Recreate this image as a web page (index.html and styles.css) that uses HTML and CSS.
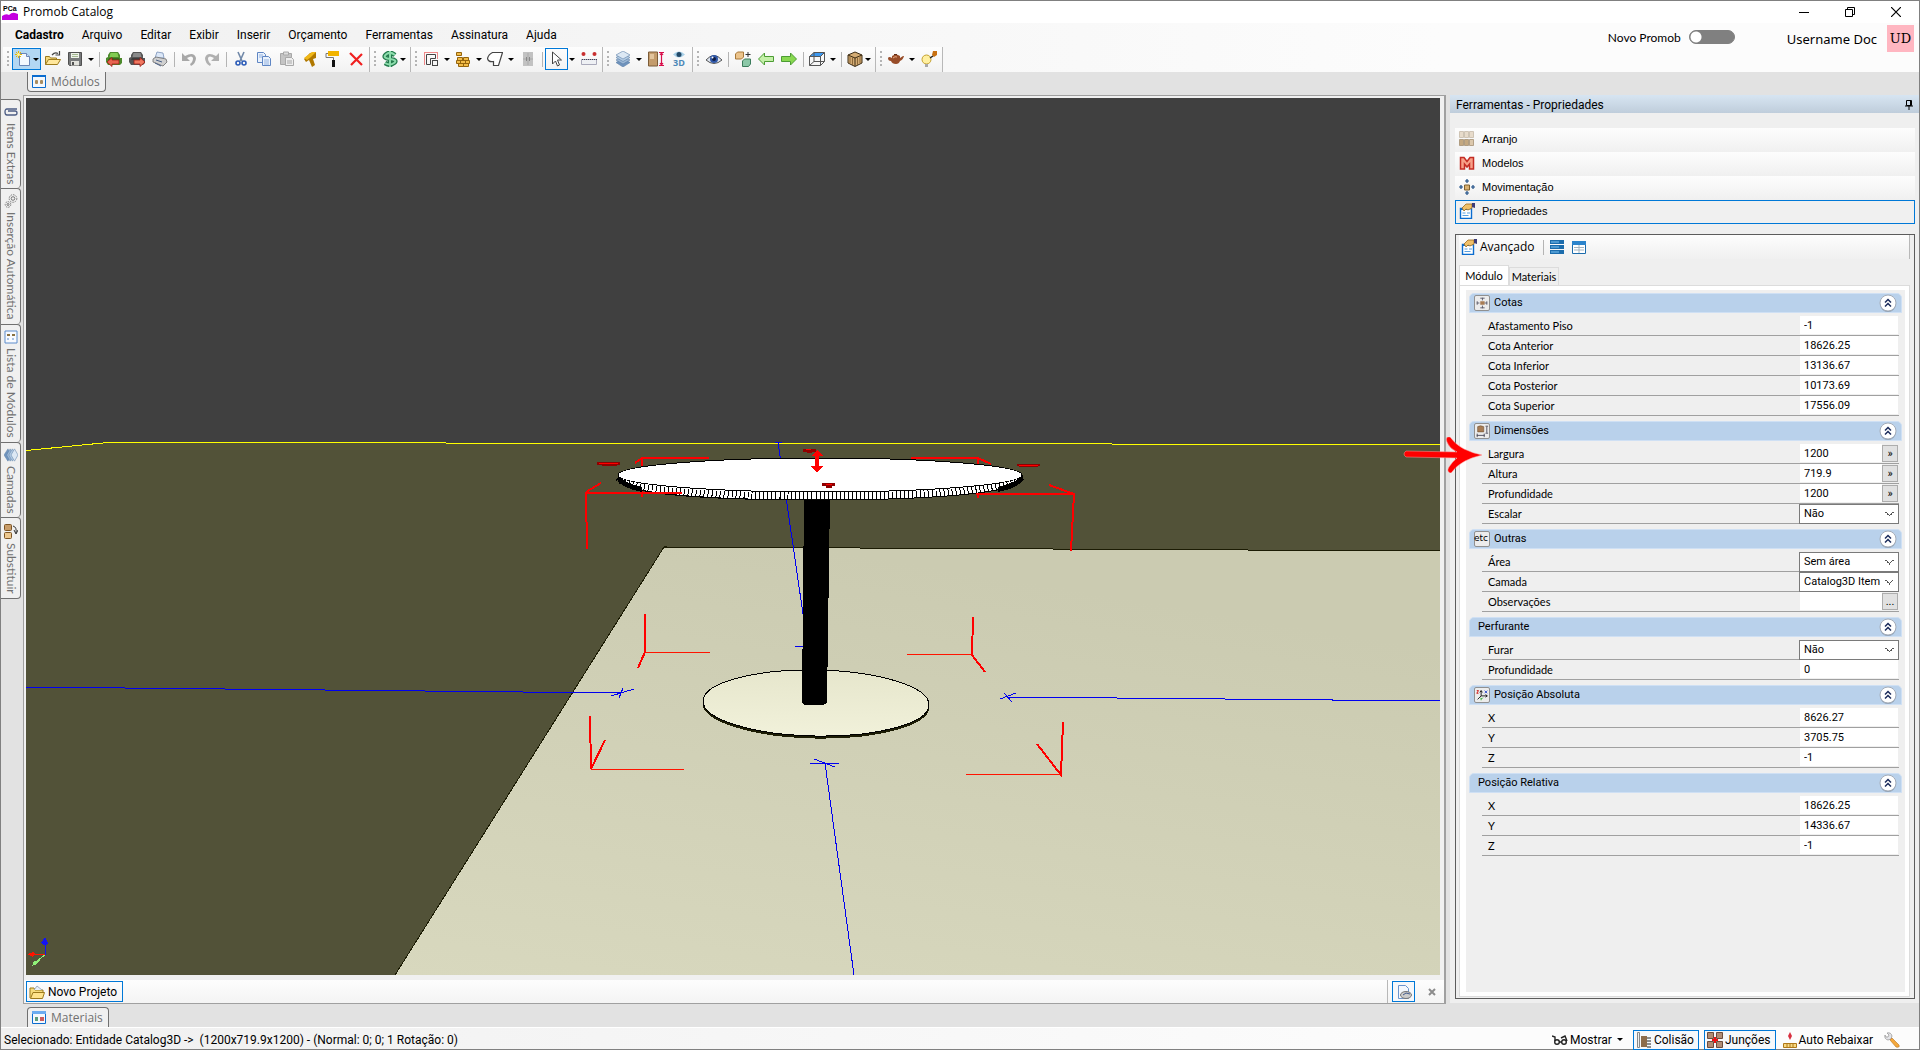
FILE: index.html
```
<!DOCTYPE html>
<html lang="pt-BR">
<head>
    <meta charset="UTF-8">
    <title>Promob Catalog</title>
    <link rel="stylesheet" href="styles.css">
</head>
<body>
    <!-- shared symbols -->
    <svg class="defs" width="0" height="0">
        <symbol id="chevrons" viewBox="0 0 18 18">
            <circle cx="9" cy="10" r="8" fill="#8ea0b4"/>
            <circle cx="9" cy="9" r="8" fill="#fff" stroke="#a4acb8"/>
            <path d="M6 8.500l3-3 3 3M6 12.500l3-3 3 3" fill="none" stroke="#1c2c5c" stroke-width="1.500"/>
        </symbol>
        <symbol id="layers" viewBox="0 0 16 16">
            <g stroke="#5c80a8" stroke-width=".6">
                <path d="M1 11.500l7-4 7 4-7 4.500z" fill="#6f93bd"/>
                <path d="M1 9l7-4 7 4-7 4z" fill="#9cb8d6"/>
                <path d="M1 6.500l7-4 7 4-7 4z" fill="#b4cce4"/>
                <path d="M1 4l7-4 7 4-7 4z" fill="#dce8f4"/>
            </g>
        </symbol>
        <symbol id="hand-form" viewBox="0 0 16 16">
            <path d="M1.500 5.500h11v10h-11z" fill="#fff" stroke="#0a6ccf" stroke-width="1.400"/>
            <path d="M1 5h9v2H1z" fill="#0a6ccf"/>
            <path d="M3 5l4-4 6 0 0 4-4 2-2-1-2 2z" fill="#f0c069" stroke="#9a6a1e" stroke-width=".8"/>
            <path d="M13 0h3v5l-3-1z" fill="#3c3c78"/>
            <path d="M3.500 10h3M3.500 12.500h6M8 10h3" stroke="#5aa0e0" stroke-width="1.200"/>
        </symbol>
        <symbol id="folder" viewBox="0 0 16 16">
            <path d="M1 14V4h4l1 2h8v3" fill="#f6dc7c" stroke="#9c7a1c"/>
            <path d="M5 6l3-4 5 4" fill="#e8f0fa" stroke="#8c9cb4" stroke-width=".8"/>
            <path d="M1.500 14.500L4 8.500h11.500l-2 6z" fill="#ffe48c" stroke="#9c7a1c"/>
        </symbol>
    </svg>

    <div class="window">
        <header class="titlebar">
            <svg class="logo" width="16" height="16" viewBox="0 0 16 16"><path d="M0 12q4-3 7-1 3-3 6-2l3 1v6H0z" fill="#c400e0"/><text x="1" y="7" class="logo-text">PCa</text></svg>
            <h1>Promob Catalog</h1>
            <div class="window-buttons">
                <button type="button" aria-label="Minimizar"><svg width="10" height="10" viewBox="0 0 10 10"><path d="M0 5.500h10" stroke="#000"/></svg></button>
                <button type="button" aria-label="Restaurar"><svg width="10" height="10" viewBox="0 0 10 10" fill="none" stroke="#000"><path d="M.5 2.500h7v7h-7zM2.500 2.500v-2h7v7h-2"/></svg></button>
                <button type="button" aria-label="Fechar"><svg width="10" height="10" viewBox="0 0 10 10"><path d="M0 0l10 10M10 0L0 10" stroke="#000" stroke-width="1.200"/></svg></button>
            </div>
        </header>

        <div class="topbar">
            <div class="topbar-left">
                <nav class="menu">
                    <a href="#" class="current">Cadastro</a>
                    <a href="#">Arquivo</a>
                    <a href="#">Editar</a>
                    <a href="#">Exibir</a>
                    <a href="#">Inserir</a>
                    <a href="#">Orçamento</a>
                    <a href="#">Ferramentas</a>
                    <a href="#">Assinatura</a>
                    <a href="#">Ajuda</a>
                </nav>
                <div class="toolbar">
                    <div class="strip">
                        <button type="button" class="drop active" aria-label="Novo"><svg width="16" height="16" viewBox="0 0 16 16"><path d="M4.500 2.500h7l3 3v9h-10z" fill="#f4f8fe" stroke="#6b87b8"/><path d="M11.500 2.500v3h3" fill="#cfdff5" stroke="#6b87b8"/><path d="M3.500 0v7M0 3.500h7M1 1l5 5M6 1L1 6" stroke="#e8b800"/><circle cx="3.500" cy="3.500" r="1.500" fill="#fff6a0"/></svg></button>
                        <button type="button" aria-label="Abrir"><svg width="16" height="16" viewBox="0 0 16 16"><path d="M.5 13.500v-8h4l1 1.500h6v3" fill="#f3d87c" stroke="#9c7a1c"/><path d="M.5 13.500l3-5h12l-3 5z" fill="#ffe79c" stroke="#9c7a1c"/><path d="M7 4q3-3.500 6-1.500M14.500 0v4h-4" fill="none" stroke="#444" stroke-width="1.200"/></svg></button>
                        <button type="button" class="split" aria-label="Salvar"><svg width="16" height="16" viewBox="0 0 16 16"><path d="M1.500 1.500h13v13h-12l-1-1z" fill="#77797a" stroke="#505050"/><path d="M4 2h8v5H4z" fill="#eef2ea"/><path d="M4 10h8v4.500H4z" fill="#e2e2dc"/><path d="M5 11h2v3H5z" fill="#505050"/><path d="M5 3.500h6M5 5.500h6" stroke="#a4b890"/></svg></button>
                        <i class="sep"></i>
                        <button type="button" aria-label="Importar"><svg width="16" height="16" viewBox="0 0 16 16"><path d="M4 1h8l2 3v3h2v5l-2 2H2l-2-3V7l2-1V4z" fill="#4d8a2c"/><path d="M4.500 2h7l1 4h-9z" fill="#82cc52"/><path d="M3 7h10l1 2H2z" fill="#356c1c"/><path d="M1 11l5-4.500V9h7v4H6v2.500z" fill="#e86450" stroke="#9c1c14" stroke-width=".8"/></svg></button>
                        <button type="button" aria-label="Exportar"><svg width="16" height="16" viewBox="0 0 16 16"><path d="M4 1h8l2 3v3h2v5l-2 2H2l-2-3V7l2-1V4z" fill="#555"/><path d="M4.500 2h7l1 4h-9z" fill="#8a8a8a"/><path d="M3 7h10l1 2H2z" fill="#3c3c3c"/><path d="M16 11l-5-4.500V9H5v4h6v2.500z" fill="#f07860" stroke="#9c1c14" stroke-width=".8"/></svg></button>
                        <button type="button" aria-label="Imprimir"><svg width="16" height="16" viewBox="0 0 16 16"><path d="M3 7L5 1l6 1 1 5z" fill="#dce8f8" stroke="#7890b8" stroke-width=".8"/><path d="M1 8l3-2 10 2 1 3-4 4-10-4z" fill="#d0d0d0" stroke="#6c6c6c" stroke-width=".8"/><path d="M4 9l6 2M3 12l6 3" stroke="#4a6088"/></svg></button>
                        <i class="sep"></i>
                        <button type="button" aria-label="Desfazer"><svg width="16" height="16" viewBox="0 0 16 16"><path d="M1 2v8h8L6 7q5-3 6 0 0 4-3 6l1 2q5-3 5-8Q13 0 4 5z" fill="#a8a8a8"/></svg></button>
                        <button type="button" aria-label="Refazer"><svg width="16" height="16" viewBox="0 0 16 16"><path d="M15 2v8H7l3-3Q5 4 4 7q0 4 3 6l-1 2Q1 12 1 7 3 0 12 5z" fill="#b0b0b0"/></svg></button>
                        <i class="sep"></i>
                        <button type="button" aria-label="Recortar"><svg width="16" height="16" viewBox="0 0 16 16" fill="none"><path d="M5 1l4 9M11 1L7 10" stroke="#7088a8" stroke-width="1.600"/><circle cx="5" cy="12" r="2" stroke="#2c5cb8" stroke-width="1.600"/><circle cx="11" cy="12" r="2" stroke="#2c5cb8" stroke-width="1.600"/></svg></button>
                        <button type="button" aria-label="Copiar"><svg width="16" height="16" viewBox="0 0 16 16" fill="#eaf2fc" stroke="#5f86c4"><path d="M1.500 1.500h6l2 2v8h-8z"/><path d="M6.500 5.500h6l2 2v7h-8z"/><path d="M8 9h5M8 11h5M8 13h5M3 4h4M3 6h3" stroke="#94b2e0"/></svg></button>
                        <button type="button" aria-label="Colar"><svg width="16" height="16" viewBox="0 0 16 16" stroke="#a8a8a8"><path d="M1.500 2.500h11v11h-11z" fill="#c4c4c4"/><path d="M4.500 1h5v3h-5z" fill="#ddd"/><path d="M6.500 6.500h6l2 2v6h-8z" fill="#eee"/><path d="M8 10h5M8 12h5"/></svg></button>
                        <button type="button" aria-label="Martelo"><svg width="16" height="16" viewBox="0 0 16 16"><path d="M2 8l6-6 6-1 0 6-3 1 2 6-3 2-3-7-3 2z" fill="#b07800"/><path d="M2 7l8-6 4 0-5 5-4 3z" fill="#f0b818"/></svg></button>
                        <button type="button" aria-label="Pintar"><svg width="16" height="16" viewBox="0 0 16 16"><path d="M3 0h11v5H3z" fill="#f2b400"/><path d="M3 2.500H1v4h7.500V10" fill="none" stroke="#777"/><path d="M7 9h3v7H7z" fill="#111"/></svg></button>
                        <button type="button" aria-label="Excluir"><svg width="16" height="16" viewBox="0 0 16 16"><path d="M2 2l12 12M14 3L3 14" stroke="#f02020" stroke-width="2.200"/></svg></button>
                    </div>
                    <div class="strip">
                        <button type="button" class="drop" aria-label="Orçamento"><svg width="16" height="16" viewBox="0 0 16 16"><path d="M8 0v16M13 4Q8 0 4 3.500T8 8t4 4-9 0" fill="none" stroke="#237a4c" stroke-width="4.500"/><path d="M8 0v16M13 4Q8 0 4 3.500T8 8t4 4-9 0" fill="none" stroke="#8cdcac" stroke-width="2"/></svg></button>
                    </div>
                    <div class="strip">
                        <button type="button" class="split" aria-label="Planta"><svg width="16" height="16" viewBox="0 0 16 16" fill="none" stroke="#444"><path d="M1 1.500h14M1.500 1v13M14.500 1v7" stroke="#e88"/><path d="M3.500 3.500h9v4h-5v6h-4z"/><rect x="9.500" y="9.500" width="5" height="5"/></svg></button>
                        <button type="button" class="split" aria-label="Paredes"><svg width="16" height="16" viewBox="0 0 16 16" fill="#f2bc48" stroke="#94640c"><path d="M1.500 1.500h5v3h-5zM2.500 6.500h5v3h-5zM8.500 6.500h5v3h-5zM1.500 9.500h4v3h-4zM5.500 9.500h5v3h-5zM10.500 9.500h4v3h-4zM3.500 12.500h5v3h-5zM8.500 12.500h5v3h-5z"/></svg></button>
                        <button type="button" class="split" aria-label="Forma"><svg width="16" height="16" viewBox="0 0 16 16"><path d="M5.500 1.500h10l-4 13h-5v-4q-5 1-6-3 1-4 5-6z" fill="#fff" stroke="#444" stroke-width="1.200"/></svg></button>
                        <button type="button" aria-label="Porta"><svg width="16" height="16" viewBox="0 0 16 16"><path d="M3 1h10v14H3z" fill="#c2c2c2"/><path d="M8 2v12M3 8h10" stroke="#aaa"/><path d="M6 6h1v4H6zM9 6h1v4H9z" fill="#888"/></svg></button>
                        <i class="sep"></i>
                        <button type="button" class="split active-outline" aria-label="Selecionar"><svg width="16" height="16" viewBox="0 0 16 16"><path d="M4.500 1v12l3-3 2 5 2-1-2-5h4z" fill="#fff" stroke="#444"/></svg></button>
                        <button type="button" aria-label="Medir"><svg width="16" height="16" viewBox="0 0 16 16"><circle cx="2.500" cy="3" r="2" fill="#c83030"/><circle cx="13.500" cy="3" r="2" fill="#c83030"/><path d="M.5 8.500h15v5H.500z" fill="#eef0f4" stroke="#aab"/><path d="M1 8.500h15" stroke="#445" stroke-dasharray="1 1"/></svg></button>
                    </div>
                    <div class="strip">
                        <button type="button" class="split" aria-label="Camadas"><svg width="16" height="16"><use href="#layers"/></svg></button>
                        <button type="button" aria-label="Cotas"><svg width="16" height="16" viewBox="0 0 16 16"><path d="M.5 1h9v14h-9z" fill="#c49c6c" stroke="#7c5c38"/><path d="M2 3h4v5H2z" fill="#e2c49c"/><path d="M11 1.500h5M11 14.500h5M13.500 2v12M12 4l1.500-2L15 4M12 12l1.500 2 1.500-2" stroke="#d8104c" fill="none" stroke-width="1.200"/></svg></button>
                        <button type="button" aria-label="Visualizar 3D"><svg width="16" height="16" viewBox="0 0 16 16"><path d="M2 3.500q6-6 12 0-6 6-12 0z" fill="#a8d0e8"/><circle cx="8" cy="3.500" r="2.500" fill="#244a68"/><text x="2" y="15" class="icon-3d">3D</text></svg></button>
                    </div>
                    <div class="strip">
                        <button type="button" aria-label="Exibir"><svg width="16" height="16" viewBox="0 0 16 16"><path d="M0 9Q8 0 16 9 8 16 0 9z" fill="#dce4f0" stroke="#555"/><circle cx="8" cy="8" r="4" fill="#3058a8"/><circle cx="8" cy="8" r="2" fill="#101c44"/><circle cx="6.500" cy="6.500" r="1" fill="#fff"/></svg></button>
                        <i class="sep"></i>
                        <button type="button" aria-label="Substituir"><svg width="16" height="16" viewBox="0 0 16 16"><path d="M.5 3l2-2h6v5l-2 2h-6z" fill="#ecc48c" stroke="#a87838"/><path d="M7.500 10l2-2h6v5l-2 2.500h-6z" fill="#8cc8a8" stroke="#3c7c5c"/><path d="M13 1v5M10.500 3.500h5" stroke="#333"/></svg></button>
                        <button type="button" aria-label="Anterior"><svg width="16" height="16" viewBox="0 0 16 16"><path d="M.5 8l6-6v3.500h9v5h-9V14z" fill="#c4f0a8" stroke="#4c9c34"/></svg></button>
                        <button type="button" aria-label="Próximo"><svg width="16" height="16" viewBox="0 0 16 16"><path d="M15.500 8l-6-6v3.500h-9v5h9V14z" fill="#88d850" stroke="#4c9c34"/></svg></button>
                        <i class="sep"></i>
                        <button type="button" class="split" aria-label="Vista"><svg width="16" height="16" viewBox="0 0 16 16" fill="none" stroke="#555"><path d="M5 1.500h10.500l-4 4H.500z" fill="#3c98f0"/><path d="M.5 5.500h11v9H.500zM15.500 1.500v9l-4 4M5 1.500v9h10.500M5 10.500l-4.500 4"/></svg></button>
                        <i class="sep"></i>
                        <button type="button" class="drop" aria-label="Material"><svg width="16" height="16" viewBox="0 0 16 16"><path d="M1 4l7-3 7 3v8l-7 3.500L1 12z" fill="#d4ac74" stroke="#3c2c14"/><path d="M1 4l7 3 7-3M8 7v8" fill="none" stroke="#3c2c14"/><path d="M3 5v7M5.500 6v8M10.500 6v8M13 5v7" fill="none" stroke="#8c6838"/></svg></button>
                    </div>
                    <div class="strip">
                        <button type="button" class="split" aria-label="Renderizar"><svg width="16" height="16" viewBox="0 0 16 16"><path d="M4 5q4-3 8 0v2l3-2h1q-1 4-4 5-1 3-4 3-4 0-5-3-3 0-3-3 1-2 4 0z" fill="#984c28"/><path d="M6 3h3v1H6z" fill="#602c14"/><path d="M5 7q2-2 4-1" stroke="#e8a880" fill="none"/></svg></button>
                        <button type="button" aria-label="Iluminação"><svg width="16" height="16" viewBox="0 0 16 16"><circle cx="5.500" cy="8.500" r="4.500" fill="#fff0a0" stroke="#c4a030"/><path d="M4 13h3v3H4z" fill="#a8a8a8"/><path d="M12 0h4v4l-3 2-2-2z" fill="#c87010"/><path d="M9 7l3-2" stroke="#222" stroke-width="1.500"/></svg></button>
                    </div>
                </div>
            </div>
            <div class="account">
                <label class="switch-label" for="novo-promob">Novo Promob</label>
                <input type="checkbox" id="novo-promob" class="switch">
                <span class="user-name">Username Doc</span>
                <span class="avatar">UD</span>
            </div>
        </div>

        <div class="workspace">
            <div class="main">
                <div class="dock-top">
                    <button type="button" class="dock-tab"><svg width="14" height="13" viewBox="0 0 14 13"><path d="M.5.5h13v12H.500z" fill="#f4f8fc" stroke="#0a6ccf"/><path d="M0 0h14v2H0z" fill="#0a6ccf"/><rect x="3" y="5" width="3" height="4" rx="1" fill="#a88c60"/><rect x="8" y="5" width="3" height="4" rx="1" fill="#a88c60"/></svg>Módulos</button>
                </div>
                <div class="center">
                    <div class="dock-side">
                        <button type="button"><svg width="14" height="14" viewBox="0 0 14 14"><path d="M13 4H3q-2 0-2 3t2 3h8q2 0 2-2t-2-2H4" fill="none" stroke="#4c5c84" stroke-width="1.300"/></svg>Itens Extras</button>
                        <button type="button"><svg width="14" height="14" viewBox="0 0 14 14" fill="none" stroke="#777"><circle cx="9" cy="4.500" r="3.800" stroke-dasharray="1.500 1"/><circle cx="9" cy="4.500" r="1.800"/><circle cx="4" cy="10.500" r="2.800" stroke-dasharray="1.500 1"/><circle cx="4" cy="10.500" r="1"/></svg>Inserção Automática</button>
                        <button type="button"><svg width="14" height="14" viewBox="0 0 14 14"><path d="M1 1h12v12H1z" fill="#f8fafe" stroke="#5c8ccc"/><path d="M3 4h3v2H3zM8 4h3v2H8z" fill="#887040"/><path d="M3 9h2M8 9h2" stroke="#5c8ccc"/></svg>Lista de Módulos</button>
                        <button type="button"><svg class="turned" width="14" height="14"><use href="#layers"/></svg>Camadas</button>
                        <button type="button"><svg width="14" height="16" viewBox="0 0 14 16"><rect x=".5" y="1.500" width="7" height="6" rx="1" fill="#c89c68" stroke="#7c5424"/><rect x=".5" y="9.500" width="7" height="6" rx="1" fill="#ecc890" stroke="#7c5424"/><path d="M9 3q4 1 3 7M10 7l2 4 2-4" fill="none" stroke="#333"/></svg>Substituir</button>
                    </div>
                    <main class="frame">
                        <svg class="viewport" viewBox="26 98 1414 877" preserveAspectRatio="none" shape-rendering="crispEdges">
                            <defs>
                                <linearGradient id="floor" x1="0" y1="1" x2=".4" y2="0">
                                    <stop offset="0" stop-color="#d8d8be"/>
                                    <stop offset="1" stop-color="#cbcbb1"/>
                                </linearGradient>
                                <linearGradient id="base" x1="0" y1="0" x2="0" y2="1">
                                    <stop offset="0" stop-color="#e6e6cc"/>
                                    <stop offset="1" stop-color="#f1f1da"/>
                                </linearGradient>
                            </defs>
                            <rect x="26" y="98" width="1414" height="877" fill="#404040"/>
                            <path d="M26 450L108 443 1440 444V975H26z" fill="#525238"/>
                            <path d="M26 450.500L108 442.500 1440 444.500" fill="none" stroke="#ff0"/>
                            <path d="M664 547L1440 551V975H395z" fill="url(#floor)"/>
                            <path d="M395 975L664 547 1440 551" fill="none" stroke="#1c1c04"/>
                            <!-- dimension lines -->
                            <g fill="none" stroke="#0000f0">
                                <path d="M26 687L622 693M611 696l23-7M623 688l-4 10"/>
                                <path d="M1440 701L1008 697M1000 699l16-6M1004 693l8 9"/>
                                <path d="M775 442h7M778 442L803 614M795 646h8"/>
                                <path d="M854 975L825 763M810 763h29M814 759l21 8"/>
                            </g>
                            <!-- back corners -->
                            <g fill="none" stroke="red" stroke-width="2">
                                <path d="M709 458h-67v39M642 458l-7 5"/>
                                <path d="M911 458h67v40M978 458l13 6"/>
                            </g>
                            <!-- base -->
                            <g transform="rotate(1 815 704)">
                                <ellipse cx="816" cy="705" rx="113" ry="33" fill="#1c1c04" stroke="#1c1c04"/>
                                <ellipse cx="816" cy="703" rx="113" ry="33" fill="url(#base)" stroke="#000"/>
                            </g>
                            <path d="M804 496H830L827 702q-2 3-5 3h-15q-4 0-5-3z" fill="#000"/>
                            <!-- table top -->
                            <path d="M618 475v6c12 14 100 19 202 19s190-6 202-19v-6z" fill="#fff" stroke="#000"/>
                            <path d="M618 478c12 14 100 18 202 18s190-5 202-18" fill="none" stroke="#000" stroke-width="7" stroke-dasharray="1 3"/>
                            <path d="M618 475c3 5 12 9 24 12v5c-14-3-20-6-24-11zM1022 475c-3 5-12 9-24 12v5c14-3 20-6 24-11z" fill="#000"/>
                            <ellipse cx="820" cy="475" rx="202" ry="17" fill="#fff" stroke="#000"/>
                            <!-- front corners -->
                            <g fill="none" stroke="red" stroke-width="2">
                                <path d="M682 493h-96l1 56M586 492l15-9"/>
                                <path d="M976 494h98l-3 57M1074 494l-25-9"/>
                                <path d="M645 614v38M645 652l-7 16M973 617l-1 38M972 655l13 17"/>
                                <path d="M590 716l1 53 14-29M1063 722l-2 53-24-31"/>
                            </g>
                            <g fill="none" stroke="#ff1400" stroke-width="1">
                                <path d="M645 652l65 1M972 655l-66-1M591 769l93 1M1061 775l-95-1"/>
                            </g>
                            <g fill="#900000">
                                <path d="M597 462h23v3h-3v1h-15v-1h-5zM1017 464h23v2h-2v1h-19v-1h-2zM803 449h13v3h-4v1h-5v-1h-4zM822 483h13v3h-3v2h-6v-2h-4z"/>
                            </g>
                            <path d="M599 463h19M1019 465h19M806 449h5M826 484h6" stroke="red"/>
                            <path d="M817 450l6 6h-4v10h4l-6 7-6-7h4v-10h-4z" fill="red"/>
                            <!-- axis gizmo -->
                            <path d="M45.500 955v-17" stroke="#1414f0"/><path d="M45 937l3 6-2 2h-3l-2-2z" fill="#1414f0"/>
                            <path d="M45 954.500H28" stroke="#ff1400"/><path d="M27 954l6-2 2 2-2 3z" fill="#ff1400"/>
                            <path d="M45 955l-11 8" stroke="#90f078"/><path d="M32 966l2-5 6-1-3 4z" fill="#90f078"/>
                        </svg>
                        <div class="docbar">
                            <div class="doc-tabs">
                                <button type="button" class="project"><svg width="16" height="16"><use href="#folder"/></svg>Novo Projeto</button>
                            </div>
                            <div class="doc-tools">
                                <button type="button" class="outlined" aria-label="Visualizar impressão"><svg width="16" height="16" viewBox="0 0 16 16"><path d="M2.500 1.500h7l3 3v10h-10z" fill="#f4f8fe" stroke="#6c94cc"/><ellipse cx="10" cy="11" rx="5.500" ry="3.500" fill="#ccc" stroke="#777"/><path d="M7 11l3-2 4 1" stroke="#445c8c" fill="none"/></svg></button>
                                <button type="button" class="close-doc" aria-label="Fechar projeto"><svg width="8" height="8" viewBox="0 0 8 8"><path d="M1 1l6 6M7 1L1 7" stroke="#8c8c8c" stroke-width="2"/></svg></button>
                            </div>
                        </div>
                    </main>
                </div>
                <div class="dock-bottom">
                    <button type="button" class="dock-tab"><svg width="14" height="13" viewBox="0 0 14 13"><path d="M.5.5h13v12H.500z" fill="#f4f8fc" stroke="#0a6ccf"/><path d="M0 0h14v3H0z" fill="#6cacf0"/><path d="M3 6h3v4H3z" fill="#5c9c7c"/><path d="M8 6h4v4H8z" fill="#cc5c5c"/></svg>Materiais</button>
                </div>
            </div>

            <aside class="panel">
                <div class="panel-title"><h2>Ferramentas - Propriedades</h2><svg width="8" height="10" viewBox="0 0 8 10"><path d="M1.500.5h5v5h-5zM0 6h8M4 6v4M5.500 1v5" fill="none" stroke="#000"/></svg></div>
                <nav class="tools">
                    <a href="#"><svg width="16" height="16" viewBox="0 0 16 16" fill="#dcc8ac" stroke="#a49074" stroke-width=".8"><path d="M.5.5h4v6h-4zM5.500.5h4v6h-4zM10.500.5h4v6h-4z" opacity=".6"/><path d="M.5 8.500h4v6h-4zM5.500 8.500h4v6h-4z" fill="#c4a880"/><path d="M10.500 8.500h4v6h-4z"/></svg>Arranjo</a>
                    <a href="#"><svg width="16" height="16" viewBox="0 0 16 16"><path d="M1.500 14V2.500h3.500l3 4 3-4h3.500V14h-4V9L8 12 5.500 9v5z" fill="#f8a088" stroke="#c42c24" stroke-width="1.500"/></svg>Modelos</a>
                    <a href="#"><svg width="16" height="16" viewBox="0 0 16 16"><path d="M5.500 6h5v5h-5z" fill="#d8b070" stroke="#80602c"/><path d="M8 0v4M6 2h4M8 12v4M6 14h4M0 8h4M2 6v4M12 8h4M14 6v4" stroke="#1c4c84" stroke-width="1.200"/></svg>Movimentação</a>
                    <a href="#" class="selected"><svg width="16" height="16"><use href="#hand-form"/></svg>Propriedades</a>
                </nav>
                <section class="props">
                    <div class="props-bar">
                        <button type="button" class="advanced"><svg width="16" height="16"><use href="#hand-form"/></svg>Avançado</button>
                        <i class="sep"></i>
                        <button type="button" aria-label="Lista"><svg width="14" height="14" viewBox="0 0 14 14"><path d="M0 0h14v4H0zM0 5h14v4H0zM0 10h14v4H0z" fill="#1c6cac"/><path d="M1 2h8M1 7h8M1 12h8" stroke="#7cc4f4"/></svg></button>
                        <button type="button" aria-label="Tabela"><svg width="14" height="13" viewBox="0 0 14 13"><path d="M.5.5h13v12H.500z" fill="#fff" stroke="#1c6cac"/><path d="M0 0h14v4H0z" fill="#2c84cc"/><path d="M7 4v8M2 6.500h10M2 9h10" stroke="#a4b4c0"/></svg></button>
                    </div>
                    <div class="tabs">
                        <button type="button" class="selected">Módulo</button>
                        <button type="button">Materiais</button>
                    </div>
                    <div class="tab-page">
                        <div class="groups">
                            <fieldset>
                                <legend><svg class="group-icon" width="16" height="16" viewBox="0 0 16 16"><path d="M6 6h5v4H6z" fill="#a87c54"/><path d="M6 2.500h5M8.500 2v3M6 13.500h5M8.500 11v3M2.500 6v4M2 8h3M13.500 6v4M11 8h3" stroke="#556"/></svg>Cotas<button type="button" aria-label="Recolher"><svg width="18" height="18"><use href="#chevrons"/></svg></button></legend>
                                <div class="row"><label for="piso">Afastamento Piso</label><input id="piso" value="-1"></div>
                                <div class="row"><label for="anterior">Cota Anterior</label><input id="anterior" value="18626.25"></div>
                                <div class="row"><label for="inferior">Cota Inferior</label><input id="inferior" value="13136.67"></div>
                                <div class="row"><label for="posterior">Cota Posterior</label><input id="posterior" value="10173.69"></div>
                                <div class="row"><label for="superior">Cota Superior</label><input id="superior" value="17556.09"></div>
                            </fieldset>
                            <fieldset>
                                <legend><svg class="group-icon" width="16" height="16" viewBox="0 0 16 16"><path d="M3 3q3-2 7 0v6H3z" fill="#a87c54" stroke="#64482c" stroke-width=".6"/><path d="M12 2.500h3M13.500 3v7M12 10.500h3M2.500 11v4M2 13h9M10.500 11v4" stroke="#445"/></svg>Dimensões<button type="button" aria-label="Recolher"><svg width="18" height="18"><use href="#chevrons"/></svg></button></legend>
                                <div class="row">
                                    <svg class="pointer" width="80" height="36" viewBox="0 0 80 36"><path d="M3 14L54 15Q46 11 44 5T47 0Q53 8 61 12T79 18Q70 20 62 24T48 36Q43 35 46 30T54 21L3 20Q-1 17 3 14z" fill="red" stroke="#ff9c9c" stroke-width=".5"/></svg>
                                    <label for="largura">Largura</label><input id="largura" value="1200"><button type="button">»</button>
                                </div>
                                <div class="row"><label for="altura">Altura</label><input id="altura" value="719.9"><button type="button">»</button></div>
                                <div class="row"><label for="prof">Profundidade</label><input id="prof" value="1200"><button type="button">»</button></div>
                                <div class="row"><label for="escalar">Escalar</label><select id="escalar"><option>Não</option></select></div>
                            </fieldset>
                            <fieldset>
                                <legend><span class="group-icon etc">etc</span>Outras<button type="button" aria-label="Recolher"><svg width="18" height="18"><use href="#chevrons"/></svg></button></legend>
                                <div class="row"><label for="area">Área</label><select id="area"><option>Sem área</option></select></div>
                                <div class="row"><label for="camada">Camada</label><select id="camada"><option>Catalog3D Item</option></select></div>
                                <div class="row"><label for="obs">Observações</label><input id="obs"><button type="button">...</button></div>
                            </fieldset>
                            <fieldset>
                                <legend>Perfurante<button type="button" aria-label="Recolher"><svg width="18" height="18"><use href="#chevrons"/></svg></button></legend>
                                <div class="row"><label for="furar">Furar</label><select id="furar"><option>Não</option></select></div>
                                <div class="row"><label for="furo-prof">Profundidade</label><input id="furo-prof" value="0"></div>
                            </fieldset>
                            <fieldset>
                                <legend><svg class="group-icon" width="16" height="16" viewBox="0 0 16 16"><path d="M7 3v6h7M7 9l-4 4M5.500 5L7 3l1.500 2M12 7.500l2 1.500-2 1.500" fill="none" stroke="#111"/><path d="M2 3h2L2 6h2" stroke="#c00" fill="none"/><path d="M11 3l3 3M14 3l-3 3" stroke="#24c"/><path d="M6 11l1.500 1.500L9 11M7 14v-2" stroke="#2a2" fill="none"/></svg>Posição Absoluta<button type="button" aria-label="Recolher"><svg width="18" height="18"><use href="#chevrons"/></svg></button></legend>
                                <div class="row"><label for="abs-x">X</label><input id="abs-x" value="8626.27"></div>
                                <div class="row"><label for="abs-y">Y</label><input id="abs-y" value="3705.75"></div>
                                <div class="row"><label for="abs-z">Z</label><input id="abs-z" value="-1"></div>
                            </fieldset>
                            <fieldset>
                                <legend>Posição Relativa<button type="button" aria-label="Recolher"><svg width="18" height="18"><use href="#chevrons"/></svg></button></legend>
                                <div class="row"><label for="rel-x">X</label><input id="rel-x" value="18626.25"></div>
                                <div class="row"><label for="rel-y">Y</label><input id="rel-y" value="14336.67"></div>
                                <div class="row"><label for="rel-z">Z</label><input id="rel-z" value="-1"></div>
                            </fieldset>
                        </div>
                    </div>
                </section>
            </aside>
        </div>

        <footer class="statusbar">
            <p>Selecionado: Entidade Catalog3D -&gt; &nbsp;(1200x719.9x1200) - (Normal: 0; 0; 1 Rotação: 0)</p>
            <div class="status-tools">
                <button type="button" class="show"><svg width="16" height="16" viewBox="0 0 16 16" fill="none" stroke="#222" stroke-width="1.400"><path d="M0 4l3 1v4M9 6l4-2 2 5M7 10h3"/><circle cx="5" cy="10" r="2.300"/><circle cx="12" cy="10" r="2.300"/></svg>Mostrar</button>
                <button type="button" class="outlined"><svg width="16" height="16" viewBox="0 0 16 16"><path d="M1.500.5h2v15h-2z" fill="#eee" stroke="#888"/><path d="M5 4h6v11H5z" fill="#8c6c4c"/><path d="M11 6h4M11 9h4M11 12h4M11 15h4" stroke="#222"/></svg>Colisão</button>
                <button type="button" class="outlined"><svg width="16" height="16" viewBox="0 0 16 16"><path d="M.5.500h6v6h-6zM9.500.500h6v6h-6zM.5 9.500h6v6h-6zM9.500 9.500h6v6h-6z" fill="#b08c74" stroke="#6c4c3c"/><path d="M8 5v6M5 8h6" stroke="#f01010" stroke-width="2"/></svg>Junções</button>
                <button type="button"><svg width="14" height="16" viewBox="0 0 14 16"><path d="M7 0l2 4-2 4-2-4z" fill="#d83040"/><path d="M.5 11.500h13v4H.500z" fill="#f8d880" stroke="#b07818"/><path d="M4 12v4M7 12v4M10 12v4" stroke="#b07818"/></svg>Auto Rebaixar</button>
                <button type="button" aria-label="Configurar"><svg width="16" height="16" viewBox="0 0 16 16"><path d="M1 3q-1 4 3 5l3-1 1-3q-1-4-5-3l2 2-1 2-2 0z" fill="#e4e4e8" stroke="#999" stroke-width=".8"/><path d="M6 8l2-2 7 7q1 3-3 2z" fill="#f4a83c" stroke="#b87420" stroke-width=".6"/></svg></button>
            </div>
        </footer>
    </div>
</body>
</html>
```

FILE: styles.css
```
* {
    box-sizing: border-box;
}

body {
    margin: 0;
    font-family: Roboto, 'Noto Sans', sans-serif;
    font-size: 12px;
    line-height: 16px;
    color: #000;
    background: #efefef;
}

h1, h2, p {
    margin: 0;
    font-size: 12px;
    font-weight: normal;
}

button {
    padding: 0;
    border: 0;
    background: none;
    font: inherit;
    color: inherit;
}

a {
    color: inherit;
    text-decoration: none;
}

svg {
    display: block;
    flex: none;
}

.defs {
    position: absolute;
}

.window {
    display: flex;
    flex-direction: column;
    height: 100vh;
    border: 1px solid #808080;
}

.titlebar {
    display: flex;
    align-items: center;
    gap: 5px;
    height: 22px;
    padding-left: 1px;
    background: #fff;
    font-family: 'Open Sans', sans-serif;
}

.logo-text {
    font: bold 7px 'Liberation Sans', sans-serif;
}

.window-buttons {
    display: flex;
    margin-left: auto;
}

.window-buttons button {
    display: grid;
    place-items: center;
    width: 46px;
    height: 22px;
}

/* menu and toolbar */
.topbar {
    display: flex;
    justify-content: space-between;
    background: linear-gradient(to right, #f0f0f0, #fcfcfc 75%);
}

.menu {
    display: flex;
    gap: 18px;
    height: 24px;
    padding-left: 14px;
    line-height: 24px;
}

.menu .current {
    font-weight: bold;
}

.toolbar {
    display: flex;
    height: 25px;
    padding-left: 2px;
}

.strip {
    display: flex;
    position: relative;
    align-items: center;
    padding: 0 2px 1px 9px;
    border-right: 1px solid #b8b8b8;
    background: linear-gradient(#fdfdfd, #f2f2f2);
}

.strip::before {
    content: "";
    position: absolute;
    left: 4px;
    top: 4px;
    height: 15px;
    border-left: 2px dotted #b4b4b4;
}

.strip button {
    display: flex;
    align-items: center;
    justify-content: center;
    width: 23px;
    height: 22px;
}

.strip .drop {
    width: 29px;
    gap: 2px;
}

.strip .split {
    width: 32px;
    justify-content: flex-start;
    padding-left: 3px;
    gap: 5px;
}

.drop::after, .split::after, .show::after {
    content: "";
    border: 3px solid transparent;
    border-top-color: #000;
    border-bottom: 0;
}

.strip .drop.active {
    border: 1px solid #0078d7;
    background: #b3d7f3;
}

.active-outline {
    background: linear-gradient(#0078d7, #0078d7) 0 0 / 23px 1px no-repeat,
        linear-gradient(#0078d7, #0078d7) 0 100% / 23px 1px no-repeat,
        linear-gradient(#0078d7, #0078d7) 0 0 / 1px 100% no-repeat,
        linear-gradient(#0078d7, #0078d7) 22px 0 / 1px 100% no-repeat;
}

.sep {
    width: 1px;
    height: 15px;
    margin: 0 2px 0 3px;
    background: #b4b4b4;
}

.icon-3d {
    font: bold 9px 'Open Sans', sans-serif;
    fill: #4c88b8;
}

.account {
    display: flex;
    align-items: center;
    height: 31px;
    padding-right: 5px;
}

.switch-label {
    padding-bottom: 2px;
    font-family: Lato, sans-serif;
}

.switch {
    appearance: none;
    width: 46px;
    height: 14px;
    margin: 0 52px 4px 8px;
    border: 1px solid #808080;
    border-radius: 7px;
    background: radial-gradient(circle at 6px 6px, #fff 5px, transparent 6px) #808080;
}

.user-name {
    font-family: 'Noto Sans', sans-serif;
    font-size: 13px;
}

.avatar {
    width: 27px;
    height: 27px;
    margin-left: 10px;
    background: #ffb6c1;
    font: 13px/27px 'DejaVu Serif', serif;
    text-align: center;
}

/* docks */
.workspace {
    display: flex;
    flex: 1;
    min-height: 0;
    background: #e2e2e2;
}

.main {
    display: flex;
    flex: 1;
    flex-direction: column;
    min-width: 0;
}

.dock-top {
    height: 23px;
    padding-left: 26px;
}

.dock-bottom {
    height: 23px;
    padding: 3px 0 0 26px;
}

.dock-tab {
    display: flex;
    align-items: center;
    gap: 5px;
    height: 20px;
    padding: 0 5px 0 4px;
    border: 1px solid #707070;
    border-top: 0;
    border-radius: 0 0 4px 4px;
    background: #f0f0f0;
    font-family: 'Open Sans', sans-serif;
    color: #707070;
}

.dock-bottom .dock-tab {
    border-top: 1px solid #707070;
    border-bottom: 0;
    border-radius: 4px 4px 0 0;
}

.center {
    display: flex;
    flex: 1;
    min-height: 0;
}

.dock-side {
    display: flex;
    flex-direction: column;
    width: 22px;
    padding-top: 4px;
    font-family: Lato, sans-serif;
}

.dock-side button {
    display: flex;
    align-items: center;
    gap: 4px;
    width: 20px;
    padding: 5px 0 4px;
    border: 1px solid #707070;
    border-left: 0;
    border-bottom-width: 0;
    border-radius: 0 4px 4px 0;
    background: #f0f0f0;
    color: #707070;
    writing-mode: vertical-rl;
}

.dock-side button:last-child {
    border-bottom-width: 1px;
}

.turned {
    transform: rotate(90deg);
}

.frame {
    display: flex;
    flex: 1;
    flex-direction: column;
    min-width: 0;
    border: 1px solid #a0a0a0;
    border-right-width: 2px;
    background: #f0f0f0;
}

.viewport {
    flex: 1;
    min-height: 0;
    width: calc(100% - 6px);
    margin: 2px 4px 5px 2px;
}

.docbar {
    display: flex;
    justify-content: space-between;
    height: 23px;
    padding-left: 2px;
    background: linear-gradient(#fdfdfd, #f4f4f4);
}

.doc-tabs {
    flex: 1;
    margin-right: 4px;
    border-right: 1px solid #b8b8b8;
}

.project {
    display: flex;
    align-items: center;
    gap: 3px;
    height: 21px;
    margin-top: 1px;
    padding: 0 5px 0 2px;
    border: 1px solid #0078d7;
}

.doc-tools {
    display: flex;
    align-items: center;
    gap: 13px;
    padding-right: 8px;
}

.outlined {
    border: 1px solid #0078d7;
    background: #f6f8fb;
}

.doc-tools .outlined {
    display: grid;
    place-items: center;
    width: 23px;
    height: 21px;
}

/* right panel */
.panel {
    display: flex;
    flex-direction: column;
    width: 469px;
    margin: 23px 0 24px 4px;
    background: #efefef;
}

.panel-title {
    display: flex;
    align-items: center;
    justify-content: space-between;
    height: 18px;
    margin-bottom: 15px;
    padding: 2px 6px 0 6px;
    background: linear-gradient(#d7e5f2, #bfcddb);
}

.tools {
    margin: 0 4px 10px 5px;
    font: 11px/20px 'Liberation Sans', sans-serif;
}

.tools a {
    display: flex;
    align-items: center;
    gap: 7px;
    height: 24px;
    padding: 0 0 2px 3px;
    border: 1px solid transparent;
    background: linear-gradient(#fdfdfd, #f0f0f0) border-box;
}

.tools .selected {
    border-color: #0078d7;
    background: #f0f0f0;
}

.props {
    display: flex;
    flex: 1;
    flex-direction: column;
    min-height: 0;
    margin: 0 4px 4px 5px;
    padding: 0 4px 1px 3px;
    border: 1px solid #5c5c5c;
}

.props-bar {
    display: flex;
    align-items: center;
    gap: 8px;
    height: 24px;
    padding-left: 2px;
    border-right: 1px solid #b8b8b8;
    background: linear-gradient(#fdfdfd, #f0f0f0);
}

.props-bar .sep {
    margin: 0 -2px 0 0;
}

.advanced {
    display: flex;
    align-items: center;
    gap: 3px;
    font-family: 'Open Sans', sans-serif;
}

.tabs {
    display: flex;
    align-items: flex-end;
    height: 26px;
    font: 11px/16px Lato, sans-serif;
}

.tabs button {
    width: 50px;
    height: 18px;
    border: 1px solid #dcdcdc;
    border-bottom: 0;
}

.tabs .selected {
    height: 20px;
    background: #fff;
}

.tab-page {
    display: flex;
    flex: 1;
    min-height: 0;
    padding: 4px 4px 4px 6px;
    border: 1px solid #dcdcdc;
    background: #fff;
}

.groups {
    flex: 1;
    padding: 3px 3px 0 3px;
    background: #efefef;
    font: 11px/16px Roboto, sans-serif;
}

fieldset {
    min-width: 0;
    margin: 0 0 5px;
    padding: 0;
    border: 0;
}

legend {
    display: flex;
    align-items: center;
    gap: 4px;
    width: 100%;
    height: 20px;
    margin-bottom: 3px;
    padding: 0 4px 0 8px;
    border: 1px solid #cfe0f4;
    border-radius: 5px 5px 0 0;
    background: #b9d1eb;
}

legend button {
    margin-left: auto;
}

.group-icon {
    width: 16px;
    height: 16px;
    margin-left: -4px;
    border: 1px solid #909090;
    border-radius: 2px;
    background: #ececec;
}

.etc {
    font: 9px/12px 'DejaVu Sans', sans-serif;
    text-indent: -1px;
}

.row {
    display: flex;
    position: relative;
    height: 20px;
    margin: 0 3px 0 13px;
    padding-right: 1px;
    border-bottom: 1px solid #a0a0a0;
}

.row label {
    flex: 1;
    padding: 2px 0 0 6px;
    font-family: Lato, sans-serif;
}

.row input, .row select {
    width: 98px;
    height: 18px;
    padding: 0 4px;
    border: 0;
    background: #fff;
    font: inherit;
    color: inherit;
}

.row:has(button) input {
    width: 82px;
}

.row button {
    width: 16px;
    height: 17px;
    margin-top: 1px;
    border: 1px solid #adadad;
    background: #e1e1e1;
    line-height: 15px;
}

.row:has(select) {
    padding-right: 0;
}

.row select {
    appearance: none;
    width: 100px;
    height: 20px;
    padding-right: 18px;
    border: 1px solid #7a7a7a;
    border-radius: 0;
    background: linear-gradient(45deg, transparent 50%, #555 50%, #555 62%, transparent 62%) 85px 7px / 5px 5px no-repeat,
        linear-gradient(-45deg, transparent 50%, #555 50%, #555 62%, transparent 62%) 89px 7px / 5px 5px no-repeat, #fff;
}

.pointer {
    position: absolute;
    right: 416px;
    top: -7px;
}

/* status bar */
.statusbar {
    display: flex;
    align-items: center;
    justify-content: space-between;
    height: 22px;
    padding: 2px 15px 0 3px;
    border-top: 1px solid #fff;
    background: linear-gradient(to right, #f0f0f0, #fcfcfc 75%);
}

.status-tools {
    display: flex;
    gap: 5px;
}

.status-tools button {
    display: flex;
    align-items: center;
    gap: 2px;
    height: 20px;
    padding: 0 4px 0 2px;
}

.status-tools .show {
    padding-right: 5px;
}

.status-tools .show::after {
    margin-left: 3px;
}
```
